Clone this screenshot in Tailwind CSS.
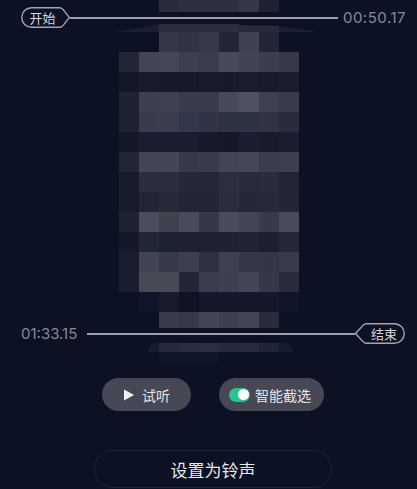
<!DOCTYPE html>
<html lang="zh">
<head>
<meta charset="utf-8">
<script src="https://cdn.jsdelivr.net/npm/@tailwindcss/browser@4"></script>
</head>
<body class="m-0 bg-[#0c1124]">
<main class="relative w-[417px] h-[489px] overflow-hidden bg-[#0c1124] flex flex-col font-['Noto_Sans_CJK_SC','Noto_Sans_CJK_SC',sans-serif]">

  <!-- mosaic artwork -->
  <section class="h-[364px] flex flex-col shrink-0 blur-[0.4px]">
    <div class="flex h-3 ml-[159px]">
      <i class="w-5 bg-[#282c3d]"></i><i class="w-5 bg-[#2c3041]"></i><i class="w-5 bg-[#2c3040]"></i><i class="w-5 bg-[#2c3040]"></i><i class="w-5 bg-[#343848]"></i><i class="w-5 bg-[#1f2233]"></i>
    </div>
    <div class="h-3"></div>
    <svg class="block h-2 w-[417px]" viewBox="0 0 417 8">
      <polygon points="115,8 150,2 159,0 279,2 313,7 313,8" fill="#1a1e30"/>
      <rect x="159" y="0" width="80" height="8" fill="#2a2e3f"/>
      <polygon points="239,1 279,2 279,8 239,8" fill="#262a3b"/>
    </svg>
    <div class="flex h-5 ml-[159px]">
      <i class="w-5 bg-[#353848]"></i><i class="w-5 bg-[#303445]"></i><i class="w-5 bg-[#353949]"></i><i class="w-5 bg-[#222536]"></i><i class="w-5 bg-[#3f4252]"></i><i class="w-5 bg-[#222536]"></i>
    </div>
    <div class="flex h-5 ml-[119px]">
      <i class="w-5 bg-[#222635]"></i><i class="w-5 bg-[#444655]"></i><i class="w-5 bg-[#454756]"></i><i class="w-5 bg-[#3c3f4f]"></i><i class="w-5 bg-[#3a3d4d]"></i><i class="w-5 bg-[#484a5a]"></i><i class="w-5 bg-[#414453]"></i><i class="w-5 bg-[#3b3e4e]"></i><i class="w-5 bg-[#363949]"></i>
    </div>
    <div class="flex h-5 ml-[119px]">
      <i class="w-5 bg-[#131726]"></i><i class="w-5 bg-[#181b2c]"></i><i class="w-5 bg-[#171a2b]"></i><i class="w-5 bg-[#161929]"></i><i class="w-5 bg-[#191c2d]"></i><i class="w-5 bg-[#171a2b]"></i><i class="w-5 bg-[#1a1d2e]"></i><i class="w-5 bg-[#181b2c]"></i><i class="w-5 bg-[#1a1d2e]"></i>
    </div>
    <div class="flex h-5 ml-[119px]">
      <i class="w-5 bg-[#1f2231]"></i><i class="w-5 bg-[#3d4050]"></i><i class="w-5 bg-[#3e4151]"></i><i class="w-5 bg-[#393c4c]"></i><i class="w-5 bg-[#383b4b]"></i><i class="w-5 bg-[#484a5a]"></i><i class="w-5 bg-[#505261]"></i><i class="w-5 bg-[#3e4151]"></i><i class="w-5 bg-[#383b4b]"></i>
    </div>
    <div class="flex h-5 ml-[119px]">
      <i class="w-5 bg-[#1e2130]"></i><i class="w-5 bg-[#393c4c]"></i><i class="w-5 bg-[#3b3e4e]"></i><i class="w-5 bg-[#33374a]"></i><i class="w-5 bg-[#303445]"></i><i class="w-5 bg-[#2e3344]"></i><i class="w-5 bg-[#2e3344]"></i><i class="w-5 bg-[#2f3344]"></i><i class="w-5 bg-[#292c3c]"></i>
    </div>
    <div class="flex h-5 ml-[119px]">
      <i class="w-5 bg-[#141828]"></i><i class="w-5 bg-[#1a1d30]"></i><i class="w-5 bg-[#1a1d30]"></i><i class="w-5 bg-[#1a1d2f]"></i><i class="w-5 bg-[#171a2b]"></i><i class="w-5 bg-[#151829]"></i><i class="w-5 bg-[#1a1e30]"></i><i class="w-5 bg-[#181b2c]"></i><i class="w-5 bg-[#1a1d2f]"></i>
    </div>
    <div class="flex h-5 ml-[119px]">
      <i class="w-5 bg-[#212634]"></i><i class="w-5 bg-[#434554]"></i><i class="w-5 bg-[#444655]"></i><i class="w-5 bg-[#373a4a]"></i><i class="w-5 bg-[#393c4b]"></i><i class="w-5 bg-[#434555]"></i><i class="w-5 bg-[#454757]"></i><i class="w-5 bg-[#3a3d4c]"></i><i class="w-5 bg-[#3c3f4e]"></i>
    </div>
    <div class="flex h-5 ml-[119px]">
      <i class="w-5 bg-[#171b2a]"></i><i class="w-5 bg-[#2b2e3d]"></i><i class="w-5 bg-[#2a2d3c]"></i><i class="w-5 bg-[#252837]"></i><i class="w-5 bg-[#242736]"></i><i class="w-5 bg-[#2c2f3e]"></i><i class="w-5 bg-[#282b3a]"></i><i class="w-5 bg-[#292c3b]"></i><i class="w-5 bg-[#222534]"></i>
    </div>
    <div class="flex h-5 ml-[119px]">
      <i class="w-5 bg-[#171b2a]"></i><i class="w-5 bg-[#222534]"></i><i class="w-5 bg-[#272a39]"></i><i class="w-5 bg-[#222534]"></i><i class="w-5 bg-[#222534]"></i><i class="w-5 bg-[#2a2d3c]"></i><i class="w-5 bg-[#252837]"></i><i class="w-5 bg-[#272a39]"></i><i class="w-5 bg-[#232635]"></i>
    </div>
    <div class="flex h-5 ml-[119px]">
      <i class="w-5 bg-[#1e2332]"></i><i class="w-5 bg-[#4b4d5c]"></i><i class="w-5 bg-[#404250]"></i><i class="w-5 bg-[#4a4c5b]"></i><i class="w-5 bg-[#353848]"></i><i class="w-5 bg-[#4a4c5b]"></i><i class="w-5 bg-[#434554]"></i><i class="w-5 bg-[#373a49]"></i><i class="w-5 bg-[#4a4c5a]"></i>
    </div>
    <div class="flex h-5 ml-[119px]">
      <i class="w-5 bg-[#141828]"></i><i class="w-5 bg-[#222736]"></i><i class="w-5 bg-[#1e2333]"></i><i class="w-5 bg-[#1e2232]"></i><i class="w-5 bg-[#1e2131]"></i><i class="w-5 bg-[#1e2232]"></i><i class="w-5 bg-[#202434]"></i><i class="w-5 bg-[#1c2030]"></i><i class="w-5 bg-[#252837]"></i>
    </div>
    <div class="flex h-5 ml-[119px]">
      <i class="w-5 bg-[#1a1d2d]"></i><i class="w-5 bg-[#414453]"></i><i class="w-5 bg-[#363a49]"></i><i class="w-5 bg-[#3c3f4e]"></i><i class="w-5 bg-[#2d3142]"></i><i class="w-5 bg-[#3e4150]"></i><i class="w-5 bg-[#343847]"></i><i class="w-5 bg-[#333646]"></i><i class="w-5 bg-[#383b4a]"></i>
    </div>
    <div class="flex h-5 ml-[119px]">
      <i class="w-5 bg-[#1a1d2d]"></i><i class="w-5 bg-[#474957]"></i><i class="w-5 bg-[#484a58]"></i><i class="w-5 bg-[#222635]"></i><i class="w-5 bg-[#3a3d4d]"></i><i class="w-5 bg-[#3d404f]"></i><i class="w-5 bg-[#444655]"></i><i class="w-5 bg-[#353848]"></i><i class="w-5 bg-[#272b3a]"></i>
    </div>
    <div class="flex h-5 ml-[139px]">
      <i class="w-5 bg-[#11152a]"></i><i class="w-5 bg-[#171b2c]"></i><i class="w-5 bg-[#0f1325]"></i><i class="w-5 bg-[#131729]"></i><i class="w-5 bg-[#14182a]"></i><i class="w-5 bg-[#14182a]"></i><i class="w-5 bg-[#14182a]"></i><i class="w-5 bg-[#11152a]"></i>
    </div>
    <div class="flex h-4 ml-[159px]">
      <i class="w-5 bg-[#383b4a]"></i><i class="w-5 bg-[#363948]"></i><i class="w-5 bg-[#444655]"></i><i class="w-5 bg-[#3d404f]"></i><i class="w-5 bg-[#444655]"></i><i class="w-5 bg-[#292c3b]"></i>
    </div>
    <div class="h-[15px]"></div>
    <div class="relative h-[9px] ml-[148px] w-[145px] rounded-t-lg bg-[#171b2d] pl-[11px] flex overflow-hidden">
      <i class="w-5 bg-[#262a3a]"></i><i class="w-5 bg-[#2a2d3d]"></i><i class="w-5 bg-[#2c2f3f]"></i><i class="w-5 bg-[#262a3a]"></i><i class="w-5 bg-[#282b3b]"></i><i class="w-5 bg-[#20243a]"></i>
    </div>
    <div class="flex h-3 ml-[159px]">
      <i class="w-[60px] bg-[#10152a]"></i>
    </div>
  </section>

  <!-- start marker -->
  <div class="absolute left-[21px] top-[7px] w-[385px] h-[21px] flex items-center">
    <div class="relative w-[49px] h-[21px] shrink-0 flex items-center justify-center pr-[6px]">
      <svg class="absolute inset-0" width="49" height="21" viewBox="0 0 49 21" fill="none"><path d="M10.5 .75H38.5Q40.5 .75 42 2.4L48.4 10.5 42 18.6Q40.5 20.25 38.5 20.25H10.5A9.75 9.75 0 0 1 10.5 .75Z" stroke="#a3a5b3" stroke-width="1.4"/></svg>
      <span class="relative text-[13px] leading-none text-[#d6d7dd]">开始</span>
    </div>
    <div class="flex-1 h-[2px] bg-[#9c9eae]"></div>
    <span class="ml-[5px] text-[15px] tracking-[0.5px] leading-none text-[#878997] font-['Inter',sans-serif]">00:50.17</span>
  </div>

  <!-- end marker -->
  <div class="absolute left-[21px] top-[323px] w-[384px] h-[21px] flex items-center">
    <span class="mr-[10px] text-[15px] leading-none text-[#878997] font-['Inter',sans-serif]">01:33.15</span>
    <div class="flex-1 h-[2px] bg-[#9c9eae]"></div>
    <div class="relative w-[50px] h-[21px] shrink-0 flex items-center justify-center pl-[8px]">
      <svg class="absolute inset-0" width="50" height="21" viewBox="0 0 50 21" fill="none"><path d="M39.5 .75H11.5Q9.5 .75 8 2.4L.6 10.5 8 18.6Q9.5 20.25 11.5 20.25H39.5A9.75 9.75 0 0 0 39.5 .75Z" stroke="#a3a5b3" stroke-width="1.4"/></svg>
      <span class="relative text-[13px] leading-none text-[#d6d7dd]">结束</span>
    </div>
  </div>

  <!-- controls -->
  <div class="mt-[14px] ml-[102px] flex gap-[28px] shrink-0">
    <button class="w-[89px] h-[33px] rounded-full bg-[#464855] flex items-center justify-center gap-[7px] text-[14px] leading-none text-[#e4e5e9]">
      <svg width="12" height="12" viewBox="0 0 12 12"><path d="M1 .5 11 6 1 11.5Z" fill="#f1f1f4"/></svg>
      <span>试听</span>
    </button>
    <button class="w-[105px] h-[33px] rounded-full bg-[#464855] flex items-center pl-[10px] gap-[5px] text-[14px] leading-none text-[#e4e5e9]">
      <span class="w-[21px] h-[14px] rounded-full bg-[#22c48f] flex items-center justify-end pr-[1px]"><span class="w-[11px] h-[11px] rounded-full bg-white"></span></span>
      <span>智能截选</span>
    </button>
  </div>
  <button class="mt-[39px] ml-[94px] w-[238px] h-[38px] shrink-0 rounded-full border border-[#1f2336] text-[17px] leading-none text-[#e7e7ea] flex items-center justify-center">设置为铃声</button>
</main>
</body>
</html>
